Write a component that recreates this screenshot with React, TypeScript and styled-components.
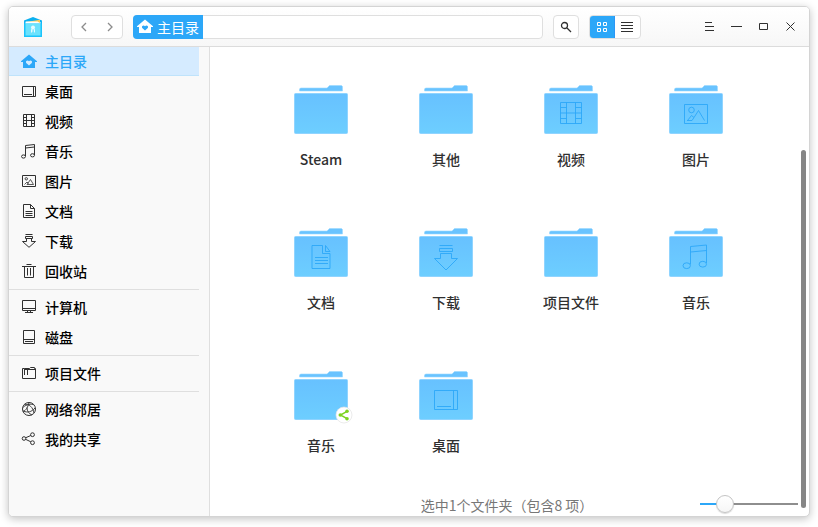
import React, { useState } from 'react';
import styled, { createGlobalStyle, css } from 'styled-components';

const GlobalStyle = createGlobalStyle`
  *, *::before, *::after { box-sizing: border-box; }
  body {
    margin: 0;
    background: #fff;
    font-family: "Noto Sans CJK SC", "Noto Sans", sans-serif;
    font-size: 14px;
    line-height: 20px;
  }
  button { font: inherit; padding: 0; border: 0; background: none; color: inherit; }
  svg { display: block; flex: none; }
`;

const Desktop = styled.div`
  min-height: 100vh;
  display: flex;
  padding: 6px 8px 10px;
`;

const Window = styled.div`
  flex: 1;
  min-width: 0;
  display: flex;
  flex-direction: column;
  overflow: hidden;
  border: 1px solid #d4d4d4;
  border-radius: 5px;
  background: #fff;
  box-shadow: 0 2px 8px rgba(0, 0, 0, 0.24);
`;

const TitleBar = styled.header`
  height: 40px;
  flex: none;
  display: flex;
  align-items: center;
  padding-right: 5px;
  border-bottom: 1px solid #dcdcdc;
  background: linear-gradient(#fff, #f7f7f7);
`;

const Logo = styled.div`
  width: 62px;
  padding-left: 14px;
`;

const ButtonGroup = styled.div`
  display: flex;
  height: 24px;
  margin-right: 10px;
  overflow: hidden;
  border: 1px solid #dfdfdf;
  border-radius: 4px;
  background: #fff;
`;

const GroupButton = styled.button<{ $active?: boolean; $single?: boolean }>`
  width: ${(p) => (p.$active ? 26 : p.$single ? 24 : 25)}px;
  display: flex;
  align-items: center;
  justify-content: center;
  color: ${(p) => (p.$active ? '#fff' : '#303030')};
  ${(p) =>
    p.$active &&
    css`
      margin: -1px 0 -1px -1px;
      background: #2ca7f8;
      box-shadow: inset 0 0 0 1px #2c97f5;
    `}
`;

const AddressBar = styled.nav`
  flex: 1;
  height: 24px;
  display: flex;
  margin-right: 10px;
  border: 1px solid #dfdfdf;
  border-radius: 4px;
  background: #fff;
`;

const Crumb = styled.button`
  display: flex;
  align-items: center;
  gap: 4px;
  margin: -1px 0 -1px -1px;
  padding: 0 4px;
  border-radius: 4px 0 0 4px;
  background: #2ca7f8;
  color: #fff;
`;

const WindowControls = styled.div`
  display: flex;
  margin-left: 45px;
`;

const ControlButton = styled.button`
  width: 27px;
  height: 27px;
  display: flex;
  align-items: center;
  justify-content: center;
  color: #303030;
`;

const Body = styled.div`
  flex: 1;
  display: flex;
`;

const Sidebar = styled.nav`
  width: 201px;
  flex: none;
  padding-right: 10px;
  border-right: 1px solid #dfdfdf;
  background: #f9f9f9;
`;

const Places = styled.ul`
  margin: 0;
  padding: 0;
  list-style: none;

  & + & {
    margin-top: 2px;
    padding-top: 3px;
    border-top: 1px solid #dfdfdf;
  }
`;

const Place = styled.a<{ $active?: boolean }>`
  height: 30px;
  display: flex;
  align-items: center;
  gap: 8px;
  padding-left: 12px;
  font-weight: 500;
  text-decoration: none;
  color: ${(p) => (p.$active ? '#2ca7f8' : '#000')};
  ${(p) =>
    p.$active &&
    css`
      background: linear-gradient(#bfe3fb, #bfe3fb) 0 28px / 100% 1px no-repeat,
        linear-gradient(#d5ebff, #d5ebff) 0 0 / 100% 28px no-repeat;
    `}

  svg {
    color: ${(p) => (p.$active ? '#2ca7f8' : '#303030')};
  }
`;

const PlaceName = styled.span`
  padding-bottom: 2px;
`;

const Content = styled.main`
  position: relative;
  flex: 1;
  min-width: 0;
  display: flex;
  flex-direction: column;
  justify-content: space-between;
`;

const FolderGrid = styled.ul`
  margin: 0;
  padding: 31px 26px 24px 24px;
  list-style: none;
  display: grid;
  grid-template-columns: repeat(auto-fill, 125px);
  justify-content: center;
  row-gap: 52px;
`;

const FolderItem = styled.li`
  display: flex;
  flex-direction: column;
  align-items: center;
  gap: 7px;
  color: #303030;
`;

const FolderName = styled.span`
  font-weight: 500;
`;

const StatusBar = styled.footer`
  display: grid;
  grid-template-columns: 1fr auto 1fr;
  align-items: start;
  padding-right: 11px;
  color: #777;
`;

const StatusText = styled.span`
  grid-column: 2;
  padding: 0 0 1px 6px;
`;

const ZoomSlider = styled.input`
  justify-self: end;
  width: 98px;
  height: 18px;
  margin: 0 0 3px;
  appearance: none;
  background: linear-gradient(
      to right,
      #2ca7f8 var(--filled),
      #8e8e8e var(--filled)
    )
    center / 100% 2px no-repeat;

  &::-webkit-slider-thumb {
    appearance: none;
    width: 18px;
    height: 18px;
    border: 1px solid #c4c4c4;
    border-radius: 50%;
    background: linear-gradient(#fff, #f6f6f6);
    box-shadow: 0 1px 1px rgba(0, 0, 0, 0.15);
  }
`;

const ScrollThumb = styled.div`
  position: absolute;
  top: 22%;
  right: 3px;
  bottom: 8px;
  width: 5px;
  border-radius: 3px;
  background: #868686;
`;

type Glyph =
  | 'desktop' | 'video' | 'music' | 'picture' | 'document' | 'download' | 'trash'
  | 'computer' | 'disk' | 'bookmark' | 'network' | 'share' | 'home';

const glyphs: Record<Glyph, React.ReactNode> = {
  home: (
    <path
      fill="currentColor"
      stroke="none"
      fillRule="evenodd"
      d="M8 0.5 0 7.2v.8h2v6h12V8h2v-.8zM8 11.6 5.2 8.9C4 7.3 6.6 5.3 8 7.2c1.4-1.9 4 .1 2.8 1.7z"
    />
  ),
  desktop: <path d="M1.5 2.5h13v10h-13zM12.5 2.5v10M3 10.5h8" />,
  video: <path d="M2.5.5h11v12h-11zM5.5.5v12M10.5.5v12M5.5 6.5h5M2.5 3.5h3M2.5 6.5h3M2.5 9.5h3M10.5 3.5h3M10.5 6.5h3M10.5 9.5h3" />,
  music: (
    <>
      <path d="M4.5 12V1.5l9-1V11M4.5 4l9-1" />
      <ellipse cx="2.5" cy="12.5" rx="2" ry="1.6" />
      <ellipse cx="11.5" cy="11.3" rx="2" ry="1.6" />
    </>
  ),
  picture: (
    <>
      <path d="M1.5 1.5h13v11h-13z" />
      <path d="m3.5 10.5 2.5-2.5 1.5 1.5M6 10.5l3.5-5 3 5z" strokeWidth=".8" />
      <circle cx="5.3" cy="4.8" r="1.2" strokeWidth=".9" />
    </>
  ),
  document: <path d="M9.5.5h-7v13h11v-9zM9.5.5v4h4M4.5 7.5h7M4.5 9.5h7M4.5 11.5h7" />,
  download: <path d="M4.5.5h7M4.5 2.5h7v2h-7zM5.5 4.5v3h-4L8 13.3l6.5-5.8h-4v-3" />,
  trash: <path d="M1 2.5h14M5.5.5h5M3.5 2.5v11h9v-11M6.5 4v7.5M9.5 4v7.5" />,
  computer: <path d="M1.5.5h13v10h-13zM1.5 8.5h13M6.5 10.5v2M9.5 10.5v2M4 12.5h8" />,
  disk: <path d="M2.5.5h11v13h-11zM2.5 9.5h11M4 11.5h8" />,
  bookmark: <path d="M3.5 2.5h-2v10h13v-10M3.5 9V2.5h5l1-1h4v1h1M6.5 9V3.5M3.5 3.5h11" />,
  network: (
    <>
      <circle cx="8" cy="7" r="6.5" />
      <path d="M3.5 2.3C8 2 12 5 13 11M1.8 5.5C4 3.5 8 1.500 12.500 2.500M2 9.500C5 8.500 7 5 8 .5M2.500 9c4 2 8 1 11.500-3M6 5.500c0 4 2 6 5 7.500" strokeWidth=".9" />
    </>
  ),
  share: (
    <>
      <circle cx="3" cy="6.5" r="1.8" />
      <circle cx="11.5" cy="2.7" r="1.9" />
      <circle cx="11.5" cy="10.7" r="1.9" />
      <path d="m4.8 5.7 5-2.2M4.8 7.4l5 2.4" />
    </>
  ),
};

const folderGlyphs: Partial<Record<Glyph, React.ReactNode>> = {
  video: <path d="M21.5 24.5h21v21h-21zM27.5 24.5v21M36.5 24.5v21M27.5 35h9M21.5 29.5h6M21.5 35h6M21.5 40.5h6M36.5 29.5h6M36.5 35h6M36.5 40.5h6" />,
  picture: (
    <>
      <path d="M20.5 26.5h23v19h-23zM23.5 42.5l4-5 2.500 2 4.500-7 6 10M23 42.500h5l2-3" />
      <circle cx="27.5" cy="32" r="2.8" />
    </>
  ),
  document: <path d="M33.5 24.5h-10.5v23h18v-15h-7.5zM36.5 24.5v6h4.5zM26 36.5h13M26 39.5h13M26 42.5h13" />,
  download: <path d="M25.5 24.5h13M25.5 27.5h13v3h-13zM26.5 32.5h11v5h6L32 49 20.5 37.5h6z" />,
  music: (
    <>
      <path d="M26.5 43.5v-18l16-1.5v18M26.5 31l16-1.5" />
      <ellipse cx="22.7" cy="44.7" rx="3.7" ry="2.9" />
      <ellipse cx="38.8" cy="43.2" rx="3.7" ry="2.9" />
    </>
  ),
  desktop: <path d="M20.5 26.5h23v19h-23zM39.5 26.5v19M23 42.5h14" />,
};

const Icon = ({ name }: { name: Glyph }) => (
  <svg width="16" height="16" viewBox="0 0 16 16" fill="none" stroke="currentColor" aria-hidden="true">
    {glyphs[name]}
  </svg>
);

const FolderIcon = ({ glyph, shared }: { glyph?: Glyph; shared?: boolean }) => (
  <svg width="64" height="64" viewBox="0 0 64 64" fill="none" aria-hidden="true">
    <defs>
      <linearGradient id="folderFace" x1="0" y1="0" x2="0" y2="1">
        <stop offset="0" stopColor="#67c1ff" />
        <stop offset="1" stopColor="#6dceff" />
      </linearGradient>
    </defs>
    <path d="M10.5 13v-2l1-1H38l2.5-2.5h12l1 1V13z" fill="#69c3ff" stroke="#9ad8ff" strokeWidth=".6" />
    <rect x="5.5" y="15.5" width="53" height="40" rx="1" fill="url(#folderFace)" stroke="#90d4ff" />
    {glyph && <g stroke="#2ca7f8" strokeOpacity=".9">{folderGlyphs[glyph]}</g>}
    {shared && (
      <g>
        <circle cx="55" cy="51" r="8" fill="#fff" stroke="#e2e2e2" strokeWidth=".7" />
        <path d="m58.5 47.2-7 3.8 7 3.8" stroke="#7ed321" strokeWidth="1.5" />
        <g fill="#7ed321">
          <circle cx="51.3" cy="51" r="1.8" />
          <circle cx="58" cy="47.2" r="1.8" />
          <circle cx="58" cy="54.8" r="1.8" />
        </g>
      </g>
    )}
  </svg>
);

const LogoIcon = () => (
  <svg width="20" height="20" viewBox="0 0 20 20" aria-hidden="true">
    <path d="M1 3.5 10 0l9 3.5V5H1z" fill="#0cb0f0" />
    <path d="M3 5 17 2.8V7H3z" fill="#fbc955" />
    <path d="M2.500 4.500h12L17 6v1H2.500z" fill="#fff" />
    <path d="M1 4h1.500v3H1zM17.500 4H19v3h-1.500z" fill="#12b4f5" />
    <path d="M1 6.500h18V20H1z" fill="#1bc4fb" />
    <path d="M2.500 6.500h15v12h-15z" fill="#6be2fd" />
    <circle cx="10" cy="10.500" r="2" fill="#e6fbff" />
    <path d="M8 16v-3.500l1.500-1v3zM10.800 11.500l1.200 1V16l-1.200-1.500z" fill="#e6fbff" />
  </svg>
);

const placeGroups: { icon: Glyph; label: string }[][] = [
  [
    { icon: 'home', label: '主目录' },
    { icon: 'desktop', label: '桌面' },
    { icon: 'video', label: '视频' },
    { icon: 'music', label: '音乐' },
    { icon: 'picture', label: '图片' },
    { icon: 'document', label: '文档' },
    { icon: 'download', label: '下载' },
    { icon: 'trash', label: '回收站' },
  ],
  [
    { icon: 'computer', label: '计算机' },
    { icon: 'disk', label: '磁盘' },
  ],
  [{ icon: 'bookmark', label: '项目文件' }],
  [
    { icon: 'network', label: '网络邻居' },
    { icon: 'share', label: '我的共享' },
  ],
];

const folders: { name: string; glyph?: Glyph; shared?: boolean }[] = [
  { name: 'Steam' },
  { name: '其他' },
  { name: '视频', glyph: 'video' },
  { name: '图片', glyph: 'picture' },
  { name: '文档', glyph: 'document' },
  { name: '下载', glyph: 'download' },
  { name: '项目文件' },
  { name: '音乐', glyph: 'music' },
  { name: '音乐', shared: true },
  { name: '桌面', glyph: 'desktop' },
];

export default function App() {
  const [zoom, setZoom] = useState(20);

  return (
    <>
      <GlobalStyle />
      <Desktop>
        <Window>
          <TitleBar>
            <Logo><LogoIcon /></Logo>
            <ButtonGroup>
              <GroupButton aria-label="后退">
                <svg width="13" height="12" viewBox="0 0 13 12" fill="none" stroke="#8c8c8c" strokeWidth="1.3"><path d="M8 2 4 6l4 4" /></svg>
              </GroupButton>
              <GroupButton aria-label="前进">
                <svg width="13" height="12" viewBox="0 0 13 12" fill="none" stroke="#8c8c8c" strokeWidth="1.3"><path d="m5 2 4 4-4 4" /></svg>
              </GroupButton>
            </ButtonGroup>
            <AddressBar aria-label="路径">
              <Crumb><Icon name="home" />主目录</Crumb>
            </AddressBar>
            <ButtonGroup>
              <GroupButton $single aria-label="搜索">
                <svg width="12" height="12" viewBox="0 0 12 12" fill="none" stroke="currentColor">
                  <circle cx="4.5" cy="4.5" r="3" strokeWidth="1.3" />
                  <path d="m7 7 4 4" strokeWidth="1.3" />
                </svg>
              </GroupButton>
            </ButtonGroup>
            <ButtonGroup>
              <GroupButton $active aria-label="图标视图" aria-pressed="true">
                <svg width="10" height="10" viewBox="0 0 10 10" fill="none" stroke="currentColor">
                  <path d="M.5.5h3v3h-3zM6.5.5h3v3h-3zM.5 6.5h3v3h-3zM6.5 6.5h3v3h-3z" />
                </svg>
              </GroupButton>
              <GroupButton aria-label="列表视图" aria-pressed="false">
                <svg width="13" height="10" viewBox="0 0 13 10" fill="none" stroke="currentColor">
                  <path d="M0 .5h12M0 3.5h12M0 6.5h12M0 9.5h12" />
                </svg>
              </GroupButton>
            </ButtonGroup>
            <WindowControls>
              <ControlButton aria-label="菜单">
                <svg width="9" height="9" viewBox="0 0 9 9" fill="none" stroke="currentColor"><path d="M0 .5h7M0 4.5h9M0 8.5h9" /></svg>
              </ControlButton>
              <ControlButton aria-label="最小化">
                <svg width="11" height="9" viewBox="0 0 11 9" fill="none" stroke="currentColor"><path d="M0 4.5h11" /></svg>
              </ControlButton>
              <ControlButton aria-label="最大化">
                <svg width="9" height="7" viewBox="0 0 9 7" fill="none" stroke="currentColor"><path d="M.5.5h8v6h-8z" /></svg>
              </ControlButton>
              <ControlButton aria-label="关闭">
                <svg width="9" height="9" viewBox="0 0 9 9" fill="none" stroke="currentColor"><path d="m.5.5 8 8M8.5.5l-8 8" /></svg>
              </ControlButton>
            </WindowControls>
          </TitleBar>
          <Body>
            <Sidebar aria-label="位置">
              {placeGroups.map((group, g) => (
                <Places key={g}>
                  {group.map((place) => (
                    <li key={place.label}>
                      <Place href="#" $active={place.icon === 'home'}>
                        <Icon name={place.icon} />
                        <PlaceName>{place.label}</PlaceName>
                      </Place>
                    </li>
                  ))}
                </Places>
              ))}
            </Sidebar>
            <Content>
              <FolderGrid>
                {folders.map((folder, i) => (
                  <FolderItem key={i}>
                    <FolderIcon glyph={folder.glyph} shared={folder.shared} />
                    <FolderName>{folder.name}</FolderName>
                  </FolderItem>
                ))}
              </FolderGrid>
              <StatusBar>
                <StatusText>选中1个文件夹（包含8 项）</StatusText>
                <ZoomSlider
                  type="range"
                  aria-label="图标大小"
                  value={zoom}
                  onChange={(e) => setZoom(Number(e.target.value))}
                  style={{ '--filled': `${zoom}%` } as React.CSSProperties}
                />
              </StatusBar>
              <ScrollThumb />
            </Content>
          </Body>
        </Window>
      </Desktop>
    </>
  );
}
